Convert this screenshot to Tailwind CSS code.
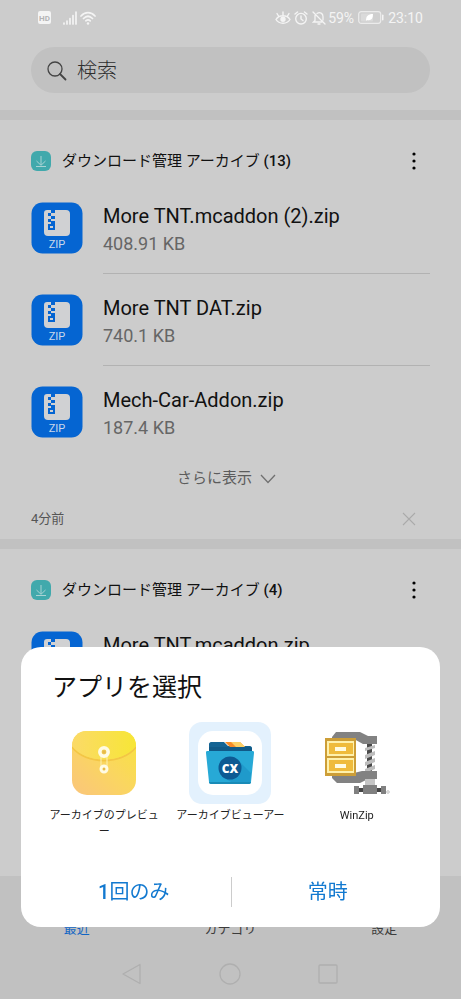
<!DOCTYPE html>
<html lang="ja">

<head>
    <meta charset="UTF-8">
    <meta name="viewport" content="width=device-width, initial-scale=1.0">
    <title>ファイル</title>
    <script src="https://cdn.jsdelivr.net/npm/@tailwindcss/browser@4"></script>
</head>

<body class="bg-[#cccccc] text-[#111111] font-[Roboto,'Noto_Sans_CJK_JP',sans-serif]">

    <!-- Shared icons -->
    <svg class="hidden">
        <symbol id="download" viewBox="0 0 20 20">
            <rect width="20" height="20" rx="6" fill="#41a9ac" />
            <path d="M10 5v9M5.5 10l4.5 4.3L14.5 10M5 15.5h10" fill="none" stroke="#a9d3d4" stroke-width="1" />
        </symbol>
        <symbol id="zip" viewBox="0 0 52 52">
            <rect x=".5" y=".5" width="51" height="51" rx="11" fill="#0565d2" />
            <path d="M16 8h19a4 4 0 0 1 4 4v18a4 4 0 0 1-4 4H17a4 4 0 0 1-4-4V11a3 3 0 0 1 3-3z" fill="#d0d1d3" />
            <path d="M20 8h4v3h-4zM17 11h3v3h-3zM20 14h4v3h-4zM17 17h3v3h-3zM20 19h4v3h-4zM17 22h7v6h-7z" fill="#0565d2" />
            <path d="M19 24h3v2h-3z" fill="#d0d1d3" />
            <text x="26" y="46" text-anchor="middle" font-size="11" fill="#c9d8ea">ZIP</text>
        </symbol>
        <symbol id="dots" viewBox="0 0 4 20">
            <circle cx="2" cy="3" r="1.6" />
            <circle cx="2" cy="10" r="1.6" />
            <circle cx="2" cy="17" r="1.6" />
        </symbol>
    </svg>

    <div class="min-h-screen flex flex-col">

        <!-- Status bar -->
        <div class="h-[35px] px-[38px] flex items-center justify-between text-sm text-[#f4f4f4]">
            <div class="flex items-center">
                <svg class="w-[13px] h-[13px]" viewBox="0 0 13 13">
                    <rect width="13" height="13" rx="2" fill="#f4f4f4" />
                    <text x="6.5" y="9.5" text-anchor="middle" font-size="8" font-weight="700" fill="#b4b4b4">HD</text>
                </svg>
                <svg class="ml-3 w-[14px] h-[14px]" viewBox="0 0 14 14" stroke="#f4f4f4" stroke-width="1.7" stroke-linecap="round">
                    <path d="M1 13v-1M4 13v-3M7 13V7.5M10 13V4.500M13 13V1" />
                </svg>
                <svg class="ml-[3px] w-4 h-[14px]" viewBox="0 0 16 14" fill="none" stroke="#f4f4f4" stroke-width="1.7" stroke-linecap="round">
                    <path d="M1 5c4-4.500 10-4.500 14 0M3.500 7.500c3-3 6-3 9 0M5.800 9.800c1.500-1.300 3-1.300 4.400 0" />
                    <circle cx="8" cy="12.500" r="1.2" fill="#f4f4f4" stroke="none" />
                </svg>
            </div>
            <div class="flex items-center">
                <svg class="w-4 h-[14px]" viewBox="0 0 16 14" fill="none" stroke="#f4f4f4" stroke-width="1.4" stroke-linecap="round">
                    <path d="M1 8.500c3-5 11-5 14 0-3 5-11 5-14 0zM8 4V1M3.500 5L2 2.500M12.500 5L14 2.500" />
                    <circle cx="8" cy="8.300" r="2" fill="#f4f4f4" />
                </svg>
                <svg class="ml-[3px] w-[14px] h-[14px]" viewBox="0 0 14 14" fill="none" stroke="#f4f4f4" stroke-width="1.4" stroke-linecap="round">
                    <circle cx="7" cy="7.700" r="5.300" />
                    <path d="M7 5v3l2 1.500M1 3l2.500-2M13 3l-2.500-2" />
                </svg>
                <svg class="ml-1 w-[14px] h-[14px]" viewBox="0 0 14 14" fill="none" stroke="#f4f4f4" stroke-width="1.3" stroke-linecap="round">
                    <path d="M1 1l12 12M3 4.500v5L1.500 11H10M5 2.500c3-2 6 0 6 3V9M6 13h2" />
                </svg>
                <span class="ml-[2px]">59%</span>
                <svg class="ml-1 w-[26px] h-[13px]" viewBox="0 0 26 13">
                    <rect x=".7" y=".7" width="22" height="11.600" rx="2.500" fill="#cfcfcf" stroke="#ebebeb" stroke-width="1.2" />
                    <rect x="3" y="2.500" width="12" height="8" rx="1" fill="#dadada" />
                    <path d="M8 10c0-5 2-7 7-7 0 5-2 7-6 6z" fill="#ffffff" />
                    <rect x="24" y="3.500" width="1.500" height="6" rx=".7" fill="#f4f4f4" />
                </svg>
                <span class="ml-1">23:10</span>
            </div>
        </div>

        <!-- Search -->
        <div class="px-[31px] pt-3 pb-[17px]">
            <label class="h-[46px] px-4 pt-[2px] flex items-center gap-[10px] rounded-full bg-[#c1c1c1]">
                <svg class="w-5 h-5 shrink-0" viewBox="0 0 20 20" fill="none" stroke="#444444" stroke-width="1.3" stroke-linecap="round">
                    <circle cx="8" cy="8" r="7" />
                    <path d="M13 13l5.500 5.500" stroke-width="1.8" />
                </svg>
                <input type="search" aria-label="検索" placeholder="検索"
                    class="min-w-0 flex-1 bg-transparent text-xl font-light outline-none placeholder:text-[#2e2e2e]">
            </label>
        </div>

        <main class="flex-1">
            <!-- First group -->
            <section class="border-t-10 border-[#c1c1c1] px-[31px]">
                <div class="pt-5">
                    <div class="h-[42px] flex items-center">
                        <svg class="w-5 h-5"><use href="#download" /></svg>
                        <h2 class="ml-[11px] flex-1 text-[15px]">ダウンロード管理 アーカイブ <span class="font-medium">(13)</span></h2>
                        <button type="button" aria-label="メニュー" class="w-8 h-8 flex items-center justify-center">
                            <svg class="w-1 h-5"><use href="#dots" /></svg>
                        </button>
                    </div>
                </div>
                <ul>
                    <li class="h-[92px] flex items-center gap-5">
                        <svg class="w-[52px] h-[52px] shrink-0"><use href="#zip" /></svg>
                        <div class="h-full flex-1 pt-5 border-b border-[#b2b2b2]">
                            <p class="text-xl leading-7">More TNT.mcaddon (2).zip</p>
                            <p class="text-lg leading-7 text-[#666666]">408.91 KB</p>
                        </div>
                    </li>
                    <li class="h-[92px] flex items-center gap-5">
                        <svg class="w-[52px] h-[52px] shrink-0"><use href="#zip" /></svg>
                        <div class="h-full flex-1 pt-5 border-b border-[#b2b2b2]">
                            <p class="text-xl leading-7">More TNT DAT.zip</p>
                            <p class="text-lg leading-7 text-[#666666]">740.1 KB</p>
                        </div>
                    </li>
                    <li class="h-[92px] flex items-center gap-5">
                        <svg class="w-[52px] h-[52px] shrink-0"><use href="#zip" /></svg>
                        <div class="h-full flex-1 pt-5">
                            <p class="text-xl leading-7">Mech-Car-Addon.zip</p>
                            <p class="text-lg leading-7 text-[#666666]">187.4 KB</p>
                        </div>
                    </li>
                </ul>
                <button type="button" class="w-full h-[41px] pr-2 flex items-center justify-center gap-2 text-[15px] text-[#5c5c5c]">
                    さらに表示
                    <svg class="w-4 h-[10px]" viewBox="0 0 16 10" fill="none" stroke="#707070" stroke-width="1.3">
                        <path d="M1 1l7 7.500L15 1" />
                    </svg>
                </button>
                <div class="h-10 flex items-center justify-between text-[13px] text-[#555555]">
                    <span>4分前</span>
                    <button type="button" aria-label="閉じる" class="mr-[14px]">
                        <svg class="w-[14px] h-[14px]" viewBox="0 0 14 14" stroke="#aaaaaa" stroke-width="1.1">
                            <path d="M1 1l12 12M13 1L1 13" />
                        </svg>
                    </button>
                </div>
            </section>

            <!-- Second group -->
            <section class="border-t-10 border-[#c1c1c1] px-[31px]">
                <div class="pt-5">
                    <div class="h-[42px] flex items-center">
                        <svg class="w-5 h-5"><use href="#download" /></svg>
                        <h2 class="ml-[11px] flex-1 text-[15px]">ダウンロード管理 アーカイブ <span class="font-medium">(4)</span></h2>
                        <button type="button" aria-label="メニュー" class="w-8 h-8 flex items-center justify-center">
                            <svg class="w-1 h-5"><use href="#dots" /></svg>
                        </button>
                    </div>
                </div>
                <ul>
                    <li class="h-[92px] flex items-center gap-5">
                        <svg class="w-[52px] h-[52px] shrink-0"><use href="#zip" /></svg>
                        <div class="h-full flex-1 pt-5">
                            <p class="text-xl leading-7">More TNT.mcaddon.zip</p>
                        </div>
                    </li>
                </ul>
            </section>
        </main>

        <!-- Bottom tabs and system keys -->
        <footer class="bg-[#c1c1c1]">
            <nav class="h-[72px] pb-[9px] grid grid-cols-3 items-end text-center text-[13px] leading-5 text-[#3c3c3c]">
                <a href="#recent" class="text-[#1266c4]">最近</a>
                <a href="#category">カテゴリ</a>
                <a href="#settings">設定</a>
            </nav>
            <div class="h-[51px] pr-[2px] flex items-center justify-center gap-[76px]">
                <button type="button" aria-label="戻る">
                    <svg class="w-[22px] h-[22px]" viewBox="0 0 22 22" fill="none" stroke="#afafaf" stroke-width="1.3" stroke-linejoin="round">
                        <path d="M19 1.500v19L2 11z" />
                    </svg>
                </button>
                <button type="button" aria-label="ホーム">
                    <svg class="w-[22px] h-[22px]" viewBox="0 0 22 22" fill="none" stroke="#afafaf" stroke-width="1.3">
                        <circle cx="11" cy="11" r="10" />
                    </svg>
                </button>
                <button type="button" aria-label="履歴">
                    <svg class="w-[22px] h-[22px]" viewBox="0 0 22 22" fill="none" stroke="#afafaf" stroke-width="1.3">
                        <rect x="2" y="2" width="18" height="18" rx="1" />
                    </svg>
                </button>
            </div>
        </footer>
    </div>

    <!-- App chooser -->
    <div role="dialog" aria-labelledby="chooserTitle"
        class="fixed inset-x-[21px] bottom-[72px] pt-[23px] pb-[15px] rounded-[20px] bg-white">
        <h1 id="chooserTitle" class="px-[31px] text-[25px] leading-9">アプリを選択</h1>
        <div class="mt-4 px-5 grid grid-cols-3 text-[11px] leading-4 text-[#222222]">
            <button type="button" class="flex flex-col items-center">
                <span class="w-[82px] h-[82px] flex items-center justify-center">
                    <svg class="w-16 h-16" viewBox="0 0 64 64">
                        <defs>
                            <linearGradient id="envelope" x1="0" y1="1" x2="1" y2="0">
                                <stop offset="0" stop-color="#fac57c" />
                                <stop offset=".5" stop-color="#fad660" />
                                <stop offset="1" stop-color="#f8e43c" />
                            </linearGradient>
                            <linearGradient id="flap" x1="0" y1="0" x2="1" y2="0">
                                <stop offset="0" stop-color="#fbda68" />
                                <stop offset="1" stop-color="#f7e636" />
                            </linearGradient>
                        </defs>
                        <rect width="64" height="64" rx="15" fill="url(#envelope)" />
                        <path d="M0 16C14 34 50 34 64 16" fill="none" stroke="#f3c645" stroke-width="2" />
                        <path d="M0 15C0 6 6 0 15 0h34c9 0 15 6 15 15C50 33 14 33 0 15z" fill="url(#flap)" />
                        <path d="M29 22v16M35 22v16" stroke="#fdf0b0" stroke-width="1" />
                        <circle cx="32" cy="21" r="4.200" fill="#f3cf55" stroke="#fffbe4" stroke-width="3.5" />
                        <circle cx="32" cy="38" r="3" fill="#f3cf55" stroke="#fffbe4" stroke-width="3" />
                        <circle cx="32" cy="21" r="1.800" fill="#e6b94a" />
                        <circle cx="32" cy="38" r="1.200" fill="#e6b94a" />
                    </svg>
                </span>
                <span class="mt-1 px-1 break-all">アーカイブのプレビュー</span>
            </button>
            <button type="button" class="flex flex-col items-center">
                <span class="w-[82px] h-[82px] flex items-center justify-center rounded-[13px] bg-[#e3f1fd]">
                    <svg class="w-16 h-16" viewBox="0 0 64 64">
                        <rect width="64" height="64" rx="15" fill="#ffffff" />
                        <path d="M11 13c0-1 1-2 2-2h13l4 4h22c1 0 2 1 2 2v7H11z" fill="#146494" />
                        <path d="M27 11h15l6 6H33z" fill="#f58a27" />
                        <path d="M33 11h9l5 5h-9z" fill="#fcd064" />
                        <path d="M11 16h41c1 0 2 1 2 2v4H11z" fill="#105a88" />
                        <path d="M9 20h46c1 0 1 1 1 2l-3 29c0 1-1 2-2 2H13c-1 0-2-1-2-2L8 22c0-1 0-2 1-2z" fill="#27a9d6" />
                        <path d="M42 31l11 11-1 9c0 1-1 2-2 2H37L24 46z" fill="#1f9acb" />
                        <path d="M11 51h42c0 1-1 2-2 2H13c-1 0-2-1-2-2z" fill="#198bb7" />
                        <circle cx="32" cy="37" r="11.500" fill="#0d5a93" />
                        <text x="32" y="41.500" text-anchor="middle" font-family="Open Sans" font-size="12" font-weight="800" fill="#ffffff">CX</text>
                    </svg>
                </span>
                <span class="mt-1 px-1 break-all">アーカイブビューアー</span>
            </button>
            <button type="button" class="flex flex-col items-center">
                <span class="w-[82px] h-[82px] flex items-center justify-center">
                    <svg class="w-[66px] h-16" viewBox="0 0 66 64">
                        <!-- screw -->
                        <path d="M43 12h5v31h-5z" fill="#4a4a4a" />
                        <path d="M41 17l10-3v3l-10 3zM41 24l10-4v4l-10 4zM41 31l10-4v4l-10 4zM41 38l10-4v4l-10 4z" fill="#bdbdbd" />
                        <!-- clamp -->
                        <path d="M8 6l4-5h24l8 4h9v8H39l-9-5H8z" fill="#828282" />
                        <path d="M8 42h22l8-2h15v8h-9l-8 4H13l-5-5z" fill="#828282" />
                        <!-- cabinet -->
                        <path d="M1 7h31v38H1z" fill="#cd9e37" />
                        <path d="M3 10h27v15H3zM3 27h27v15H3z" fill="#fff1ac" />
                        <path d="M5 12h24v11H5zM5 29h24v11H5z" fill="#efbb3c" />
                        <path d="M11 16h11v4H11zM11 33h11v4H11z" fill="#fffbe1" />
                        <!-- handle -->
                        <path d="M41 48h10v7H41z" fill="#c5c5c5" />
                        <path d="M34 57h24v4H34z" fill="#444444" />
                        <path d="M39 54h14v9H39zM30 55h5v8h-5zM57 55h5v8h-5z" fill="#808080" />
                        <circle cx="64" cy="61" r="1.300" fill="none" stroke="#999999" stroke-width=".6" />
                    </svg>
                </span>
                <span class="mt-1 px-1">WinZip</span>
            </button>
        </div>
        <div class="mt-8 h-10 grid grid-cols-2 items-center text-xl text-[#1279d0]">
            <button type="button" class="pl-4"><span class="font-medium">1</span>回のみ</button>
            <button type="button" class="h-[30px] pr-4 border-l border-[#cccccc]">常時</button>
        </div>
    </div>

</body>

</html>
